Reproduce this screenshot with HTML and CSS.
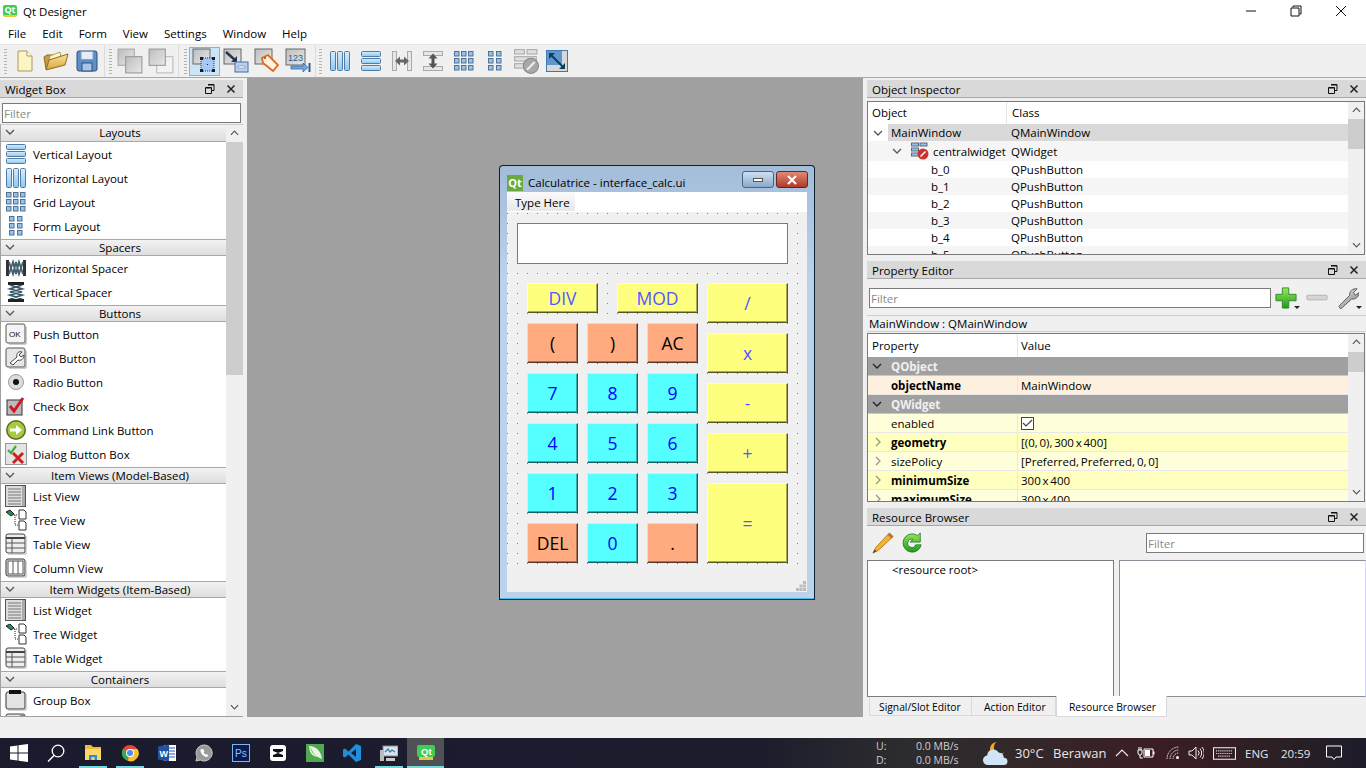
FILE: index.html
```html
<!DOCTYPE html>
<html lang="en">
<head>
  <meta charset="UTF-8">
  <title>Qt Designer</title>
  <link rel="stylesheet" href="styles.css">
</head>
<body>

<!-- icon sprite -->
<svg class="sprite" xmlns="http://www.w3.org/2000/svg">
  <defs>
    <linearGradient id="g-gray" x1="0" y1="0" x2="1" y2="1"><stop offset="0" stop-color="#bdbdbd"/><stop offset="1" stop-color="#e8e8e8"/></linearGradient>
    <linearGradient id="g-bar" x1="0" y1="0" x2="0" y2="1"><stop offset="0" stop-color="#d6eeff"/><stop offset="1" stop-color="#8cc8f2"/></linearGradient>
    <linearGradient id="g-green" x1="0" y1="0" x2="0" y2="1"><stop offset="0" stop-color="#9be85a"/><stop offset="1" stop-color="#1f9a1f"/></linearGradient>
    <linearGradient id="g-folder" x1="0" y1="0" x2="0" y2="1"><stop offset="0" stop-color="#fbe39a"/><stop offset="1" stop-color="#d9a53c"/></linearGradient>
    <linearGradient id="g-steel" x1="0" y1="0" x2="1" y2="1"><stop offset="0" stop-color="#f2f2f2"/><stop offset="1" stop-color="#777"/></linearGradient>
  </defs>

  <symbol id="i-new" viewBox="0 0 22 22"><path d="M4 1h9l5 5v15H4z" fill="#fdf5c4" stroke="#a89a62"/><path d="M13 1v5h5" fill="#fff" stroke="#a89a62"/></symbol>
  <symbol id="i-open" viewBox="0 0 26 22"><path d="M3 19 1 7l3-2h6l2 2h7l1 3v2z" fill="#c99a3e" stroke="#8c6a24"/><path d="M17 2 7 6l-1 5 12-3z" fill="#fff6d0" stroke="#b89a50"/><path d="M3 20 6 10l19-6-3 11z" fill="url(#g-folder)" stroke="#8c6a24"/></symbol>
  <symbol id="i-save" viewBox="0 0 22 22"><rect x="1" y="1" width="20" height="20" rx="2" fill="#5f8fc8" stroke="#2d4f80"/><rect x="5" y="1.500" width="12" height="8" fill="#e4edf8" stroke="#7f9cc0"/><rect x="6" y="13" width="10" height="8" fill="#a9c4e4" stroke="#2d4f80"/></symbol>
  <symbol id="i-copya" viewBox="0 0 24 24"><rect x="1" y="1" width="15" height="15" fill="url(#g-gray)" stroke="#aaa"/><rect x="8" y="8" width="15" height="15" fill="url(#g-gray)" stroke="#999"/></symbol>
  <symbol id="i-copyb" viewBox="0 0 24 24"><rect x="8" y="8" width="15" height="15" fill="#f2f2f2" stroke="#bbb"/><rect x="1" y="1" width="15" height="15" fill="url(#g-gray)" stroke="#999"/></symbol>
  <symbol id="i-edit" viewBox="0 0 26 26"><rect x="1" y="1" width="17" height="15" fill="url(#g-gray)" stroke="#666"/><rect x="9" y="10" width="13" height="13" fill="#a8c8f4" stroke="#26304a" stroke-dasharray="1 1"/><path d="M8 9h3v3H8zM20 9h3v3h-3zM8 21h3v3H8zM20 21h3v3h-3zM15 16h1v1h-1z" fill="#141c30"/></symbol>
  <symbol id="i-signal" viewBox="0 0 26 26"><rect x="1" y="1" width="17" height="15" fill="url(#g-gray)" stroke="#666"/><path d="m3 4 9 8" stroke="#26344e" stroke-width="2.500"/><path d="M14 8v6H8z" fill="#26344e"/><rect x="12" y="14" width="13" height="10" fill="#b6d2f2" stroke="#4a6a94"/><rect x="15" y="18" width="7" height="2" fill="#fff" stroke="#4a6a94" stroke-width=".5"/></symbol>
  <symbol id="i-buddy" viewBox="0 0 26 26"><rect x="1" y="1" width="17" height="15" fill="url(#g-gray)" stroke="#666"/><path d="m8 10 6-3 10 10-5 6L9 15z" fill="#fff2e0" stroke="#e0661a" stroke-width="1.800"/><circle cx="11" cy="10" r="1" fill="#555"/></symbol>

  <symbol id="i-hlay" viewBox="0 0 22 22"><g fill="url(#g-bar)" stroke="#567ba3"><rect x="1.500" y="1.500" width="5" height="19" rx="1"/><rect x="8.500" y="1.500" width="5" height="19" rx="1"/><rect x="15.500" y="1.500" width="5" height="19" rx="1"/></g></symbol>
  <symbol id="i-vlay" viewBox="0 0 22 22"><g fill="url(#g-bar)" stroke="#567ba3"><rect x="1.500" y="1.500" width="19" height="5" rx="1"/><rect x="1.500" y="8.500" width="19" height="5" rx="1"/><rect x="1.500" y="15.500" width="19" height="5" rx="1"/></g></symbol>
  <symbol id="i-grid" viewBox="0 0 22 22"><g fill="#8ec4ee" stroke="#56708f"><rect x="1.500" y="1.500" width="4.500" height="4.500"/><rect x="8.500" y="1.500" width="4.500" height="4.500"/><rect x="15.500" y="1.500" width="4.500" height="4.500"/><rect x="1.500" y="8.500" width="4.500" height="4.500"/><rect x="8.500" y="8.500" width="4.500" height="4.500"/><rect x="15.500" y="8.500" width="4.500" height="4.500"/><rect x="1.500" y="15.500" width="4.500" height="4.500"/><rect x="8.500" y="15.500" width="4.500" height="4.500"/><rect x="15.500" y="15.500" width="4.500" height="4.500"/></g></symbol>
  <symbol id="i-form" viewBox="0 0 22 22"><g fill="#8ec4ee" stroke="#56708f"><rect x="4.500" y="1.500" width="4.500" height="4.500"/><rect x="12.500" y="1.500" width="4.500" height="4.500"/><rect x="4.500" y="8.500" width="4.500" height="4.500"/><rect x="12.500" y="8.500" width="4.500" height="4.500"/><rect x="4.500" y="15.500" width="4.500" height="4.500"/><rect x="12.500" y="15.500" width="4.500" height="4.500"/></g></symbol>
  <symbol id="i-hsplit" viewBox="0 0 22 22"><g fill="#e6e6e6" stroke="#aaa"><rect x="1.500" y="1.500" width="4" height="19"/><rect x="16.500" y="1.500" width="4" height="19"/></g><path d="M4 11l5-4.500v3h4v-3l5 4.500-5 4.500v-3H9v3z" fill="#666"/></symbol>
  <symbol id="i-vsplit" viewBox="0 0 22 22"><g fill="#e6e6e6" stroke="#aaa"><rect x="1.500" y="1.500" width="19" height="4"/><rect x="1.500" y="16.500" width="19" height="4"/></g><path d="M11 3.500l4.500 5h-3v5h3l-4.500 5-4.500-5h3v-5h-3z" fill="#555"/></symbol>
  <symbol id="i-break" viewBox="0 0 24 24"><g fill="#e0e0e0" stroke="#aaa"><rect x="1.500" y="1.500" width="9" height="4"/><rect x="13" y="1.500" width="9" height="4"/><rect x="1.500" y="8" width="20" height="4"/><rect x="1.500" y="14.500" width="9" height="4"/></g><circle cx="16.500" cy="16.500" r="7" fill="#a8a8a8" stroke="#888"/><path d="m13 20 7-7" stroke="#eee" stroke-width="2"/></symbol>
  <symbol id="i-adjust" viewBox="0 0 22 22"><rect x=".5" y=".5" width="21" height="21" fill="#d8d8d8" stroke="#3d78b4"/><rect x="1" y="1" width="15" height="14" fill="#5d97cd"/><path d="m5 5 12 12" stroke="#073f66" stroke-width="2"/><path d="M3 3h6l-6 6zM19 19h-6l6-6z" fill="#073f66"/></symbol>

  <symbol id="i-hspacer" viewBox="0 0 22 22"><rect x="1" y="3" width="3" height="16" fill="#333"/><rect x="18" y="3" width="3" height="16" fill="#333"/><path d="m4 5 4 12 3-12 3 12 4-12M4 17l4-12 3 12 3-12 4 12" fill="none" stroke="#41606e" stroke-width="1.800"/></symbol>
  <symbol id="i-vspacer" viewBox="0 0 22 22"><rect x="3" y="1" width="16" height="3" fill="#222"/><rect x="3" y="18" width="16" height="3" fill="#222"/><path d="m5 4 12 4-12 3 12 3-12 4M17 4 5 8l12 3-12 3 12 4" fill="none" stroke="#3c5a68" stroke-width="1.800"/></symbol>
  <symbol id="i-tool" viewBox="0 0 22 22"><rect x="1" y="1" width="19" height="19" rx="2" fill="#e6e6e6" stroke="#555"/><path d="M21 4v17H4" fill="none" stroke="#999"/><path d="m5 16 7-6c-1-4 2-6 5-5l-3 3 2 2 3-2c0 4-3 6-6 5l-5 5z" fill="#fff" stroke="#444"/></symbol>
  <symbol id="i-radio" viewBox="0 0 22 22"><circle cx="11" cy="11" r="7.500" fill="#ddd" stroke="#999"/><circle cx="11" cy="11" r="3" fill="#111"/></symbol>
  <symbol id="i-check" viewBox="0 0 22 22"><rect x="2" y="5" width="15" height="15" fill="#bbb" stroke="#333"/><path d="m5 11 4 5 9-13" fill="none" stroke="#d01824" stroke-width="3"/></symbol>
  <symbol id="i-cmd" viewBox="0 0 22 22"><circle cx="11" cy="11" r="10" fill="#5c6b26"/><circle cx="11" cy="11" r="8.500" fill="#a6cc3e"/><path d="M5 9.500h6V6l6 5-6 5v-3.500H5z" fill="#fff"/></symbol>
  <symbol id="i-dlg" viewBox="0 0 22 22"><rect x=".5" y=".5" width="21" height="21" fill="#e4e4e4" stroke="#999"/><path d="m3 7 3 3 5-7" fill="none" stroke="#3fae3f" stroke-width="2.200"/><path d="m8 10 10 10M18 10 8 20" stroke="#d02020" stroke-width="3"/></symbol>
  <symbol id="i-list" viewBox="0 0 22 22"><rect x=".5" y=".5" width="20" height="21" fill="#ddd" stroke="#555"/><rect x="17" y="1" width="3" height="20" fill="#aaa"/><path d="M3 4h13M3 7h13M3 10h13M3 13h13M3 16h13M3 19h13" stroke="#777"/></symbol>
  <symbol id="i-tree" viewBox="0 0 22 22"><path d="m1 3 4-2 4 4-3 2z" fill="#2f8a3c" stroke="#123"/><path d="M9 6h4M10 6v10h3" fill="none" stroke="#222" stroke-dasharray="1 1"/><path d="M14 1h5l2 2v7h-7zM14 12h5l2 2v7h-7z" fill="#fff" stroke="#333"/></symbol>
  <symbol id="i-table" viewBox="0 0 22 22"><rect x="1" y="1" width="19" height="19" rx="2" fill="#eee" stroke="#444"/><path d="M1 5h19" stroke="#444" stroke-width="2"/><path d="M1 10h19M1 15h19M7 5v15" stroke="#555"/><path d="M21 3v18H3" fill="none" stroke="#aaa"/></symbol>
  <symbol id="i-column" viewBox="0 0 22 22"><rect x="1" y="2" width="19" height="17" rx="2" fill="#eee" stroke="#333"/><rect x="3" y="4" width="15" height="13" fill="#fff" stroke="#555"/><path d="M8 4v13M13 4v13" stroke="#555"/><path d="M21 4v16H3" fill="none" stroke="#aaa"/></symbol>
  <symbol id="i-group" viewBox="0 0 22 22"><rect x="1" y="3" width="19" height="17" rx="2" fill="#e4e4e4" stroke="#333"/><rect x="4" y="1" width="12" height="4" fill="#111"/><path d="M21 5v16H3" fill="none" stroke="#aaa"/></symbol>
  <symbol id="i-scroll" viewBox="0 0 22 22"><rect x="1" y="1" width="19" height="19" rx="2" fill="#e4e4e4" stroke="#444"/><rect x="15" y="2" width="4" height="17" fill="#888"/></symbol>

  <symbol id="i-float" viewBox="0 0 10 10"><path d="M3 .5h6v6H7M.5 3.500h6v6h-6z" fill="none" stroke="#111"/><path d="M3 1h6M1 4h5" stroke="#111"/></symbol>
  <symbol id="i-close" viewBox="0 0 10 10"><path d="m1.500 1.500 7 7m0-7-7 7" stroke="#222" stroke-width="1.500"/></symbol>
  <symbol id="i-chev" viewBox="0 0 10 6"><path d="m1 1 4 4 4-4" fill="none" stroke="#555" stroke-width="1.300"/></symbol>

  <symbol id="i-plus" viewBox="0 0 24 24"><path d="M8 1h7v7h8v7h-8v8H8v-8H1V8h7z" fill="url(#g-green)" stroke="#2a8a2a"/></symbol>
  <symbol id="i-minus" viewBox="0 0 24 24"><rect x="1" y="9" width="22" height="5" rx="1" fill="#d6d6d6" stroke="#b0b0b0"/></symbol>
  <symbol id="i-wrench" viewBox="0 0 24 24"><path d="m2 21 12-12c-1-4 3-8 8-7l-4 4 2 3 4-3c0 5-4 8-8 7L4 24z" fill="url(#g-steel)" stroke="#555"/></symbol>
  <symbol id="i-pencil" viewBox="0 0 24 24"><path d="M19 1l4 4L7 20l-6 3 3-6z" fill="#f0b432" stroke="#b5791a"/><path d="m19 1 4 4-2 2-4-4z" fill="#c96a3a"/><path d="M1 23l2-4 2 2z" fill="#444"/></symbol>
  <symbol id="i-refresh" viewBox="0 0 24 24"><path d="M12 2a10 10 0 1 0 10 12h-6a4.500 4.500 0 1 1-3-6l-3 3h11V1l-3 3a10 10 0 0 0-6-2z" fill="url(#g-green)" stroke="#106a10" stroke-width=".8"/></symbol>
  <symbol id="i-cwarn" viewBox="0 0 18 18"><g fill="#8ec4ee" stroke="#667"><rect x=".5" y="1" width="7" height="3"/><rect x="9" y="1" width="7" height="3"/><rect x=".5" y="6" width="7" height="3"/><rect x=".5" y="11" width="7" height="3"/></g><circle cx="12" cy="12" r="5.500" fill="#c8352e"/><path d="m9.500 14.500 5-5" stroke="#fff" stroke-width="1.500"/></symbol>

  <symbol id="t-win" viewBox="0 0 18 18"><path d="M0 2.500 7.500 1.400v7.100H0zM8.500 1.300 18 0v8.500H8.500zM0 9.500h7.500v7.100L0 15.500zM8.500 9.500H18V18l-9.500-1.300z" fill="#fff"/></symbol>
  <symbol id="t-search" viewBox="0 0 18 18"><circle cx="11" cy="7" r="5.800" fill="none" stroke="#fff" stroke-width="1.300"/><path d="M7 11.500 1 17.500" stroke="#fff" stroke-width="1.500"/></symbol>
  <symbol id="t-folder" viewBox="0 0 18 18"><path d="M1 1h6l2 2h8v13H1z" fill="#f0b93a"/><rect x="1" y="5" width="16" height="11" fill="#fcd76a"/><path d="M5 16v-5h8v5h-2.500v-3h-3v3z" fill="#2a8fd8"/></symbol>
  <symbol id="t-chrome" viewBox="0 0 18 18"><circle cx="9" cy="9" r="8" fill="#e8443a"/><path d="M9 9 2 5a8 8 0 0 0 5 11.800z" fill="#34a853"/><path d="M9 5h7.500a8 8 0 0 1-9.500 11.800z" fill="#fbc02d"/><circle cx="9" cy="9" r="4" fill="#fff"/><circle cx="9" cy="9" r="3" fill="#4a8cf0"/></symbol>
  <symbol id="t-wa" viewBox="0 0 18 18"><path d="M9 1a8 8 0 0 0-7 11.800L1 17l4.300-1A8 8 0 1 0 9 1z" fill="#9a9a9a" stroke="#c8c8c8"/><path d="M6 5c-2 2 2 8 6 8l1.500-1.500-2-1.500-1 .8-2-2.200.8-1-1-2.600z" fill="#fff"/></symbol>
  <symbol id="t-cap" viewBox="0 0 18 18"><rect x="1" y="1" width="16" height="16" rx="3" fill="#fff"/><path d="M4 5h10v2L9 9l5 2v2H4v-2l5-2-5-2z" fill="#111"/></symbol>
  <symbol id="t-corel" viewBox="0 0 18 18"><rect width="18" height="18" fill="#52a850"/><path d="M3 2c7 0 12 5 13 13-5-2-8-4-9-7L3 2c2 5 5 9 8 11C6 12 3 8 3 2z" fill="#eaf5e0"/></symbol>
  <symbol id="t-code" viewBox="0 0 18 18"><path d="M13 0 5.500 7.500 2 4.500 0 5.500v7l2 1 3.500-3L13 18l5-2V2zm0 5v8L8 9z" fill="#1f8fdc"/></symbol>
  <symbol id="t-remote" viewBox="0 0 18 18"><rect x="3" y="2" width="15" height="10" fill="#d8e4ec" stroke="#889"/><path d="m5 8 3-3 2 3 2-2 3 2" fill="none" stroke="#3a78a8" stroke-width="1.200"/><rect x="0" y="6" width="4" height="11" fill="#bbb"/><rect x="6" y="14" width="9" height="3" fill="#ccc"/></symbol>
  <symbol id="t-cloud" viewBox="0 0 24 24"><path d="M13 1a7 7 0 1 0 7 10 6 6 0 0 1-7-10z" fill="#f7a81b"/><path d="M5 23a4.500 4.500 0 0 1-1-9 6 6 0 0 1 11-3 5 5 0 0 1 5 5 3.500 3.500 0 0 1 0 7z" fill="#cfe4f7"/></symbol>
  <symbol id="t-up" viewBox="0 0 14 8"><path d="m1 7 6-6 6 6" fill="none" stroke="#eee" stroke-width="1.100"/></symbol>
  <symbol id="t-batt" viewBox="0 0 18 12"><path d="M7 2h9v8H7z" fill="none" stroke="#fff"/><rect x="8" y="3" width="5" height="6" fill="#fff"/><rect x="16" y="4.500" width="1.500" height="3" fill="#fff"/><path d="M1 3h4v3a2 2 0 0 1-4 0zM2 0v3M4 0v3M3 8v3h3" fill="none" stroke="#fff"/></symbol>
  <symbol id="t-wifi" viewBox="0 0 14 14"><path d="M1 13A12 12 0 0 1 13 1M4 13a9 9 0 0 1 9-9M7 13a6 6 0 0 1 6-6" fill="none" stroke="#ddd" stroke-dasharray="1.500 .8"/><circle cx="11.500" cy="11.500" r="1.500" fill="#fff"/></symbol>
  <symbol id="t-vol" viewBox="0 0 16 14"><path d="M1 5h3l4-4v12l-4-4H1z" fill="none" stroke="#eee"/><path d="M10 4.500a3.500 3.500 0 0 1 0 5M12 2.500a7 7 0 0 1 0 9M14 1a9 9 0 0 1 0 12" fill="none" stroke="#eee"/></symbol>
  <symbol id="t-keys" viewBox="0 0 22 12"><rect x=".5" y=".5" width="21" height="11" fill="none" stroke="#eee"/><path d="M3 3.500h16M3 6h16M5 8.500h12" stroke="#eee" stroke-dasharray="1 1"/></symbol>
  <symbol id="t-note" viewBox="0 0 16 16"><path d="M.5 1h15v11H10l-2 2.500L6 12H.5z" fill="none" stroke="#fff"/></symbol>
</svg>

<div class="app">

  <header class="titlebar">
    <span class="qt-mark">Qt</span>
    <span class="app-name">Qt Designer</span>
    <div class="win-ctl">
      <svg width="12" height="12" viewBox="0 0 12 12"><path d="M1 6h10" stroke="#111"/></svg>
      <svg width="12" height="12" viewBox="0 0 12 12"><path d="M3 2.500V1h8v8H9.500M1 3h8v8H1z" fill="none" stroke="#111"/></svg>
      <svg width="12" height="12" viewBox="0 0 12 12"><path d="m1 1 10 10M11 1 1 11" stroke="#111"/></svg>
    </div>
  </header>

  <nav class="menubar">
    <span>File</span><span>Edit</span><span>Form</span><span>View</span><span>Settings</span><span>Window</span><span>Help</span>
  </nav>

  <div class="toolbar">
    <i class="grip"></i>
    <button class="tb"><svg class="ico"><use href="#i-new"/></svg></button>
    <button class="tb"><svg class="ico ico-w"><use href="#i-open"/></svg></button>
    <button class="tb"><svg class="ico"><use href="#i-save"/></svg></button>
    <i class="tb-sep"></i><i class="grip"></i>
    <button class="tb"><svg class="ico ico-l"><use href="#i-copya"/></svg></button>
    <button class="tb"><svg class="ico ico-l"><use href="#i-copyb"/></svg></button>
    <i class="tb-sep sep-wide"></i><i class="grip"></i>
    <button class="tb on"><svg class="ico ico-l"><use href="#i-edit"/></svg></button>
    <button class="tb"><svg class="ico ico-l"><use href="#i-signal"/></svg></button>
    <button class="tb"><svg class="ico ico-l"><use href="#i-buddy"/></svg></button>
    <button class="tb">
      <svg class="ico ico-l" viewBox="0 0 26 26"><rect x="1" y="1" width="19" height="16" fill="url(#g-gray)" stroke="#666"/><text x="3" y="13" font-size="9" font-family="Liberation Sans, sans-serif" fill="#2d5b96">123</text><path d="M6 18h12v-3l5 4.500-5 4.500v-3H6z" fill="#6fa8dc" stroke="#2d5b96" stroke-width=".7"/><rect x="23.500" y="15" width="2" height="9" fill="#2d5b96"/></svg>
    </button>
    <i class="tb-sep sep-thin"></i><i class="grip"></i>
    <button class="tb"><svg class="ico"><use href="#i-hlay"/></svg></button>
    <button class="tb"><svg class="ico"><use href="#i-vlay"/></svg></button>
    <button class="tb"><svg class="ico"><use href="#i-hsplit"/></svg></button>
    <button class="tb"><svg class="ico"><use href="#i-vsplit"/></svg></button>
    <button class="tb"><svg class="ico"><use href="#i-grid"/></svg></button>
    <button class="tb"><svg class="ico"><use href="#i-form"/></svg></button>
    <button class="tb"><svg class="ico ico-l"><use href="#i-break"/></svg></button>
    <button class="tb"><svg class="ico"><use href="#i-adjust"/></svg></button>
  </div>

  <main class="workspace">

    <!-- Widget Box -->
    <aside class="dock-left">
      <div class="dock-title">Widget Box
        <span class="dock-btns"><svg><use href="#i-float"/></svg><svg><use href="#i-close"/></svg></span>
      </div>
      <input class="filter wb-filter" placeholder="Filter">
      <div class="wb-frame">
        <div class="wb-list">
          <div class="wb-cat"><svg class="chev"><use href="#i-chev"/></svg>Layouts</div>
          <div class="wb-item"><svg class="ico"><use href="#i-vlay"/></svg>Vertical Layout</div>
          <div class="wb-item"><svg class="ico"><use href="#i-hlay"/></svg>Horizontal Layout</div>
          <div class="wb-item"><svg class="ico"><use href="#i-grid"/></svg>Grid Layout</div>
          <div class="wb-item"><svg class="ico"><use href="#i-form"/></svg>Form Layout</div>
          <div class="wb-cat"><svg class="chev"><use href="#i-chev"/></svg>Spacers</div>
          <div class="wb-item"><svg class="ico"><use href="#i-hspacer"/></svg>Horizontal Spacer</div>
          <div class="wb-item"><svg class="ico"><use href="#i-vspacer"/></svg>Vertical Spacer</div>
          <div class="wb-cat"><svg class="chev"><use href="#i-chev"/></svg>Buttons</div>
          <div class="wb-item">
            <svg class="ico" viewBox="0 0 22 22"><rect x="1" y="1" width="19" height="19" rx="2" fill="#f4f4f4" stroke="#555"/><path d="M21 4v17H4" fill="none" stroke="#999"/><text x="4" y="14" font-size="8" font-family="Liberation Sans, sans-serif" fill="#111">OK</text></svg>Push Button
          </div>
          <div class="wb-item"><svg class="ico"><use href="#i-tool"/></svg>Tool Button</div>
          <div class="wb-item"><svg class="ico"><use href="#i-radio"/></svg>Radio Button</div>
          <div class="wb-item"><svg class="ico"><use href="#i-check"/></svg>Check Box</div>
          <div class="wb-item"><svg class="ico"><use href="#i-cmd"/></svg>Command Link Button</div>
          <div class="wb-item"><svg class="ico"><use href="#i-dlg"/></svg>Dialog Button Box</div>
          <div class="wb-cat"><svg class="chev"><use href="#i-chev"/></svg>Item Views (Model-Based)</div>
          <div class="wb-item"><svg class="ico"><use href="#i-list"/></svg>List View</div>
          <div class="wb-item"><svg class="ico"><use href="#i-tree"/></svg>Tree View</div>
          <div class="wb-item"><svg class="ico"><use href="#i-table"/></svg>Table View</div>
          <div class="wb-item"><svg class="ico"><use href="#i-column"/></svg>Column View</div>
          <div class="wb-cat"><svg class="chev"><use href="#i-chev"/></svg>Item Widgets (Item-Based)</div>
          <div class="wb-item"><svg class="ico"><use href="#i-list"/></svg>List Widget</div>
          <div class="wb-item"><svg class="ico"><use href="#i-tree"/></svg>Tree Widget</div>
          <div class="wb-item"><svg class="ico"><use href="#i-table"/></svg>Table Widget</div>
          <div class="wb-cat"><svg class="chev"><use href="#i-chev"/></svg>Containers</div>
          <div class="wb-item"><svg class="ico"><use href="#i-group"/></svg>Group Box</div>
          <div class="wb-item"><svg class="ico"><use href="#i-scroll"/></svg></div>
        </div>
        <div class="sb sb-wb">
          <svg class="sb-up"><use href="#i-chev"/></svg>
          <div class="sb-thumb"></div>
          <svg class="sb-down"><use href="#i-chev"/></svg>
        </div>
      </div>
    </aside>

    <!-- MDI area with the form being edited -->
    <section class="canvas">
      <div class="form-win">
        <div class="form-title">
          <span class="qt-mark qt-form">Qt</span>
          <span class="form-name">Calculatrice - interface_calc.ui</span>
          <span class="cap-btn cap-min"><i></i></span>
          <span class="cap-btn cap-close"><svg width="12" height="10" viewBox="0 0 12 10"><path d="m2 1 8 8m0-8-8 8" stroke="#fff" stroke-width="2"/></svg></span>
        </div>
        <div class="form-client">
          <div class="form-menu"><span>Type Here</span></div>
          <div class="central">
            <div class="display"></div>
            <div class="keys">
              <div class="keys-left">
                <div class="key-row key-row-top">
                  <button class="key yel k-div">DIV</button>
                  <button class="key yel k-mod">MOD</button>
                </div>
                <div class="key-row">
                  <button class="key ora">(</button><button class="key ora">)</button><button class="key ora">AC</button>
                </div>
                <div class="key-row">
                  <button class="key cya">7</button><button class="key cya">8</button><button class="key cya">9</button>
                </div>
                <div class="key-row">
                  <button class="key cya">4</button><button class="key cya">5</button><button class="key cya">6</button>
                </div>
                <div class="key-row">
                  <button class="key cya">1</button><button class="key cya">2</button><button class="key cya">3</button>
                </div>
                <div class="key-row">
                  <button class="key ora">DEL</button><button class="key cya">0</button><button class="key ora">.</button>
                </div>
              </div>
              <div class="keys-right">
                <button class="key yel">/</button>
                <button class="key yel">x</button>
                <button class="key yel">-</button>
                <button class="key yel">+</button>
                <button class="key yel k-eq">=</button>
              </div>
            </div>
          </div>
          <div class="form-status"><svg width="10" height="10" viewBox="0 0 10 10"><path d="M7 0h3v3H7zM3.500 3.500h3v3h-3zM7 3.500h3v3H7zM0 7h3v3H0zM3.500 7h3v3h-3zM7 7h3v3H7z" fill="#bbb"/></svg></div>
        </div>
      </div>
    </section>

    <!-- right docks -->
    <aside class="dock-right">
      <div class="dock-title">Object Inspector
        <span class="dock-btns"><svg><use href="#i-float"/></svg><svg><use href="#i-close"/></svg></span>
      </div>
      <div class="obj-frame">
        <div class="obj-tree">
          <div class="obj-head"><span class="col-obj">Object</span><span class="col-cls">Class</span></div>
          <div class="obj-row obj-main">
            <span class="col-obj"><svg class="chev"><use href="#i-chev"/></svg><b>MainWindow</b></span><span class="col-cls">QMainWindow</span>
          </div>
          <div class="obj-row obj-central alt">
            <span class="col-obj"><svg class="chev"><use href="#i-chev"/></svg><svg class="cw-ico"><use href="#i-cwarn"/></svg>centralwidget</span><span class="col-cls">QWidget</span>
          </div>
          <div class="obj-row"><span class="col-obj leaf">b_0</span><span class="col-cls">QPushButton</span></div>
          <div class="obj-row alt"><span class="col-obj leaf">b_1</span><span class="col-cls">QPushButton</span></div>
          <div class="obj-row"><span class="col-obj leaf">b_2</span><span class="col-cls">QPushButton</span></div>
          <div class="obj-row alt"><span class="col-obj leaf">b_3</span><span class="col-cls">QPushButton</span></div>
          <div class="obj-row"><span class="col-obj leaf">b_4</span><span class="col-cls">QPushButton</span></div>
          <div class="obj-row alt"><span class="col-obj leaf">b_5</span><span class="col-cls">QPushButton</span></div>
        </div>
        <div class="sb sb-obj">
          <svg class="sb-up"><use href="#i-chev"/></svg>
          <div class="sb-thumb"></div>
          <svg class="sb-down"><use href="#i-chev"/></svg>
        </div>
      </div>

      <div class="dock-title dock-prop">Property Editor
        <span class="dock-btns"><svg><use href="#i-float"/></svg><svg><use href="#i-close"/></svg></span>
      </div>
      <div class="prop-tools">
        <input class="filter prop-filter" placeholder="Filter">
        <span class="drop"><svg class="ico"><use href="#i-plus"/></svg></span>
        <span class="drop none"><svg class="ico"><use href="#i-minus"/></svg></span>
        <span class="drop"><svg class="ico"><use href="#i-wrench"/></svg></span>
      </div>
      <div class="prop-class">MainWindow : QMainWindow</div>
      <div class="prop-frame">
        <div class="prop-table">
          <div class="prop-head"><span class="pc-name">Property</span><span class="pc-val">Value</span></div>
          <div class="prop-group"><svg class="chev"><use href="#i-chev"/></svg>QObject</div>
          <div class="prop-row r-peach"><span class="pc-name"><b>objectName</b></span><span class="pc-val">MainWindow</span></div>
          <div class="prop-group"><svg class="chev"><use href="#i-chev"/></svg>QWidget</div>
          <div class="prop-row r-pale"><span class="pc-name">enabled</span><span class="pc-val"><i class="cb"><svg width="11" height="9" viewBox="0 0 11 9"><path d="m1 4 3 3 6-6" fill="none" stroke="#444" stroke-width="1.200"/></svg></i></span></div>
          <div class="prop-row r-yel"><span class="pc-name exp"><svg class="chev"><use href="#i-chev"/></svg><b>geometry</b></span><span class="pc-val">[(0, 0), 300 x 400]</span></div>
          <div class="prop-row r-pale"><span class="pc-name exp"><svg class="chev"><use href="#i-chev"/></svg>sizePolicy</span><span class="pc-val">[Preferred, Preferred, 0, 0]</span></div>
          <div class="prop-row r-yel"><span class="pc-name exp"><svg class="chev"><use href="#i-chev"/></svg><b>minimumSize</b></span><span class="pc-val">300 x 400</span></div>
          <div class="prop-row r-pale"><span class="pc-name exp"><svg class="chev"><use href="#i-chev"/></svg><b>maximumSize</b></span><span class="pc-val">300 x 400</span></div>
        </div>
        <div class="sb sb-prop">
          <svg class="sb-up"><use href="#i-chev"/></svg>
          <div class="sb-thumb"></div>
          <svg class="sb-down"><use href="#i-chev"/></svg>
        </div>
      </div>

      <div class="dock-title dock-res">Resource Browser
        <span class="dock-btns"><svg><use href="#i-float"/></svg><svg><use href="#i-close"/></svg></span>
      </div>
      <div class="res-tools">
        <svg class="ico"><use href="#i-pencil"/></svg>
        <svg class="ico"><use href="#i-refresh"/></svg>
        <input class="filter res-filter" placeholder="Filter">
      </div>
      <div class="res-lists">
        <div class="res-box res-tree">&lt;resource root&gt;</div>
        <div class="res-box res-files"></div>
      </div>
      <div class="tabs">
        <span class="tab t1">Signal/Slot Editor</span>
        <span class="tab t2">Action Editor</span>
        <span class="tab t3">Resource Browser</span>
      </div>
    </aside>
  </main>

  <div class="statusbar"></div>

  <footer class="taskbar">
    <span class="tk"><svg class="tk-s"><use href="#t-win"/></svg></span>
    <span class="tk"><svg class="tk-s"><use href="#t-search"/></svg></span>
    <span class="tk open"><svg class="tk-i"><use href="#t-folder"/></svg></span>
    <span class="tk open"><svg class="tk-i"><use href="#t-chrome"/></svg></span>
    <span class="tk">
      <svg class="tk-i" viewBox="0 0 18 18"><rect x="6" y="1" width="12" height="16" fill="#fff"/><path d="M11 4h6M11 7h6M11 10h6M11 13h6" stroke="#2b5fb0" stroke-width="1.200"/><path d="M0 2.500 11 .5v17L0 15.500z" fill="#24529e"/><text x="1.500" y="12.500" font-size="9" font-weight="700" font-family="Liberation Sans, sans-serif" fill="#fff">W</text></svg>
    </span>
    <span class="tk"><svg class="tk-i"><use href="#t-wa"/></svg></span>
    <span class="tk">
      <svg class="tk-s" viewBox="0 0 18 18"><rect x=".5" y=".5" width="17" height="17" fill="#0a1a55" stroke="#7fb4f0"/><text x="3" y="13" font-size="10" font-family="Liberation Sans, sans-serif" fill="#8cc0f8">Ps</text></svg>
    </span>
    <span class="tk"><svg class="tk-s"><use href="#t-cap"/></svg></span>
    <span class="tk"><svg class="tk-s"><use href="#t-corel"/></svg></span>
    <span class="tk"><svg class="tk-i"><use href="#t-code"/></svg></span>
    <span class="tk open"><svg class="tk-i"><use href="#t-remote"/></svg></span>
    <span class="tk open cur">
      <svg class="tk-i" viewBox="0 0 18 18"><rect y="1" width="18" height="12" rx="2" fill="#41cd52"/><text x="4" y="10.500" font-size="9.500" font-weight="700" font-family="Liberation Sans, sans-serif" fill="#fff">Qt</text><rect x="2" y="13" width="14" height="3" fill="#f5c33b"/></svg>
    </span>

    <div class="tray">
      <div class="net"><span>U:</span><span>0.0 MB/s</span><span>D:</span><span>0.0 MB/s</span></div>
      <svg class="tr-cloud"><use href="#t-cloud"/></svg>
      <span class="tr-temp">30°C</span>
      <span class="tr-wx">Berawan</span>
      <svg class="tr-up"><use href="#t-up"/></svg>
      <svg class="tr-batt"><use href="#t-batt"/></svg>
      <svg class="tr-wifi"><use href="#t-wifi"/></svg>
      <svg class="tr-vol"><use href="#t-vol"/></svg>
      <svg class="tr-keys"><use href="#t-keys"/></svg>
      <span class="tr-lang">ENG</span>
      <span class="tr-clock">20:59</span>
      <svg class="tr-note"><use href="#t-note"/></svg>
    </div>
  </footer>
</div>
</body>
</html>
```
FILE: styles.css
```css
* { box-sizing: border-box; }

body {
  margin: 0;
  font: 11.5px "Open Sans", "Noto Sans", sans-serif;
  color: #000;
  background: #f0f0f0;
}

button, input { font: inherit; }
input::placeholder { color: #8a8a8a; opacity: 1; }

.sprite { position: absolute; width: 0; height: 0; }

.app {
  width: 1366px;
  height: 768px;
  display: flex;
  flex-direction: column;
  overflow: hidden;
}

.ico { width: 22px; height: 22px; flex: none; display: block; }
.ico-w { width: 26px; }
.ico-l { width: 26px; height: 26px; }
.chev { width: 10px; height: 6px; flex: none; }

/* top of the window */
.titlebar {
  height: 22px;
  background: #fff;
  display: flex;
  align-items: center;
  padding-left: 3px;
  flex: none;
}
.qt-mark {
  width: 14px;
  height: 12px;
  background: #41cd52;
  color: #fff;
  font-size: 9px;
  font-weight: 700;
  line-height: 10px;
  text-align: center;
  border-radius: 2px;
  border-bottom: 2px solid #f0c93a;
}
.app-name { margin-left: 6px; }
.win-ctl {
  margin-left: auto;
  display: flex;
  gap: 33px;
  padding-right: 19px;
}

.menubar {
  height: 22px;
  background: #fff;
  display: flex;
  align-items: center;
  flex: none;
}
.menubar span { padding: 0 8px; }

.toolbar {
  height: 34px;
  background: #f0f0f0;
  border-top: 1px solid #e6e6e6;
  border-bottom: 1px solid #a8a8a8;
  display: flex;
  align-items: center;
  padding-left: 4px;
  flex: none;
}
.grip {
  width: 3px;
  height: 25px;
  margin-right: 2px;
  background: repeating-linear-gradient(#b4b4b4 0 1px, transparent 1px 3px);
}
.tb {
  width: 31px;
  height: 29px;
  padding: 0;
  border: 1px solid transparent;
  background: none;
  display: flex;
  align-items: center;
  justify-content: center;
}
.tb.on { background: #cde4f7; border-color: #7cb6e4; }
.tb-sep {
  width: 1px;
  height: 32px;
  background: #dcdcdc;
  margin: 0 4px 0 2px;
}
.sep-wide { margin-right: 5px; }
.sep-thin { margin-right: 3px; }

.workspace { height: 639px; display: flex; flex: none; }

/* docks */
.dock-left { width: 243px; padding-top: 2px; flex: none; }
.dock-right { width: 499px; margin-left: 4px; padding-top: 2px; flex: none; }

.dock-title {
  height: 18px;
  background: #d9d9d9;
  border-bottom: 1px solid #a8a8a8;
  display: flex;
  align-items: center;
  padding: 1px 0 0 5px;
}
.dock-btns {
  margin-left: auto;
  display: flex;
  gap: 11px;
  padding-right: 7px;
}
.dock-btns svg { width: 10px; height: 10px; }

.filter {
  display: block;
  height: 20px;
  padding: 0 1px;
  border: 1px solid #7a7a7a;
  background: #fff;
  outline: none;
}
.wb-filter { width: 239px; margin: 5px 0 1px 2px; }

.wb-frame {
  height: 593px;
  display: flex;
  border: 1px solid #a0a0a0;
  border-top: 1px solid #d0d0d0;
  background: #fff;
}
.wb-list { width: 225px; overflow: hidden; flex: none; }
.wb-cat {
  height: 17px;
  margin-bottom: 1px;
  padding-left: 13px;
  position: relative;
  text-align: center;
  line-height: 16px;
  background: linear-gradient(#f2f2f2, #dedede);
  border-top: 1px solid #a8a8a8;
  border-bottom: 1px solid #a8a8a8;
}
.wb-cat:first-child { border-top: 0; }
.wb-cat .chev { position: absolute; left: 4px; top: 4px; }
.wb-item {
  height: 24px;
  display: flex;
  align-items: center;
  gap: 6px;
  padding: 0 0 2px 4px;
}

/* scrollbars */
.sb {
  width: 17px;
  background: #f0f0f0;
  display: flex;
  flex-direction: column;
  flex: none;
}
.sb svg { width: 9px; height: 6px; margin: 5px 4px 6px; flex: none; }
.sb-up { transform: rotate(180deg); }
.sb-down { margin-top: auto !important; }
.sb-thumb { background: #cdcdcd; flex: none; }
.sb-wb .sb-thumb { height: 233px; }
.sb-obj { width: 16px; }
.sb-obj .sb-thumb { height: 30px; }
.sb-prop { width: 16px; }
.sb-prop .sb-thumb { height: 20px; margin-top: 1px; }

/* canvas */
.canvas {
  width: 616px;
  margin-left: 4px;
  background: #a0a0a0;
  position: relative;
  flex: none;
}
.form-win {
  position: absolute;
  left: 252px;
  top: 87px;
  width: 316px;
  height: 435px;
  border: 1px solid #0e2030;
  border-radius: 4px 4px 0 0;
  border-bottom-color: #0a3a52;
  background: linear-gradient(#a3bcd8 0, #b9d1ea 25%, #bcd3ec 100%);
  box-shadow: inset 0 -1px 0 #4ab8e8;
  padding: 0 7px;
}
.form-title {
  height: 26px;
  display: flex;
  align-items: center;
  position: relative;
}
.qt-form {
  width: 16px;
  height: 16px;
  margin-top: 7px;
  font-size: 11px;
  line-height: 16px;
  background: #6aa93c;
  border: 0;
  border-radius: 0;
  flex: none;
}
.form-name { margin: 7px 0 0 5px; }
.cap-btn {
  position: absolute;
  top: 5px;
  width: 32px;
  height: 17px;
  border: 1px solid #4a6480;
  border-radius: 3px;
  display: flex;
  align-items: center;
  justify-content: center;
}
.cap-min { left: 235px; background: linear-gradient(#cfe0f2, #8aa8c8); }
.cap-min i { width: 10px; height: 4px; background: #fff; border: 1px solid #555; }
.cap-close { left: 269px; background: linear-gradient(#e08a78, #b03a28); border-color: #5e2a22; }

.form-client {
  width: 300px;
  height: 400px;
  background: #f0f0f0;
  display: flex;
  flex-direction: column;
}
.form-menu { height: 20px; background: #fff; }
.form-menu span {
  display: block;
  width: 68px;
  height: 19px;
  padding-left: 8px;
  line-height: 21px;
  background: linear-gradient(#fafafa, #e8e8e8);
}
.central {
  height: 360px;
  padding: 11px 0 0 10px;
  background-image: conic-gradient(from 270deg at 1px 1px, #808080 90deg, transparent 0);
  background-size: 10px 10px;
  background-position: 0 1px;
}
.display {
  width: 271px;
  height: 41px;
  background: #fff;
  border: 1px solid #7a7a7a;
}
.keys { display: flex; margin: 19px 0 0 10px; gap: 9px; }
.keys-left { width: 171px; display: flex; flex-direction: column; gap: 10px; }
.keys-right { width: 81px; display: flex; flex-direction: column; gap: 10px; }
.key-row { display: flex; justify-content: space-between; }
.key-row-top { height: 30px; }

.key {
  width: 51px;
  height: 40px;
  padding: 0;
  font-size: 17.5px;
  border: 1px solid;
}
.keys-right .key { width: 81px; }
.keys-right .k-eq { height: 80px; }
.key-row-top .key { height: 30px; }
.key-row-top .k-div { width: 71px; }
.key-row-top .k-mod { width: 81px; }
.yel { background: #ffff7f; color: #5555ff; border-color: #ffffbf #55552a #55552a #ffffbf; box-shadow: inset -1px -1px 0 #aaaa55; }
.cya { background: #55ffff; color: #0000ff; border-color: #aaffff #1a5f5f #1a5f5f #aaffff; box-shadow: inset -1px -1px 0 #38aaaa; }
.ora { background: #ffaa7f; color: #000; border-color: #ffd4bf #553829 #553829 #ffd4bf; box-shadow: inset -1px -1px 0 #aa7154; }

.form-status {
  height: 20px;
  display: flex;
  justify-content: flex-end;
  align-items: flex-end;
  padding: 0 1px 1px 0;
}

/* object inspector */
.obj-frame {
  height: 154px;
  margin-top: 3px;
  display: flex;
  border: 1px solid #7a7a7a;
  background: #fff;
  width: 498px;
}
.obj-tree { flex: 1; overflow: hidden; }
.obj-head {
  height: 22px;
  display: flex;
  align-items: center;
}
.col-obj { width: 139px; display: flex; align-items: center; flex: none; height: 100%; white-space: nowrap; }
.col-cls { padding-left: 4px; }
.obj-head .col-obj { padding: 0 0 2px 4px; border-right: 1px solid #e5e5e5; }
.obj-head .col-cls { padding: 0 0 2px 5px; }
.obj-row { height: 17px; display: flex; align-items: center; }
.obj-row.alt { background: #f5f5f5; }
.obj-main { background: linear-gradient(90deg, #fff 20px, #d9d9d9 20px); }
.obj-main b { font-weight: 400; margin-left: 8px; }
.obj-main .chev { margin-left: 5px; }
.obj-central { height: 20px; }
.obj-central .chev { margin-left: 24px; }
.cw-ico { width: 18px; height: 18px; margin: 0 4px 0 9px; flex: none; }
.leaf { padding-left: 63px; }

/* property editor */
.dock-prop { margin-top: 6px; }
.prop-tools {
  display: flex;
  align-items: center;
  margin: 9px 0 7px 2px;
  height: 20px;
}
.prop-filter { width: 402px; }
.drop { position: relative; width: 31px; padding-left: 4px; }
.drop::after {
  content: "";
  position: absolute;
  right: 2px;
  bottom: 0;
  border: 3px solid transparent;
  border-top-color: #222;
  border-bottom: 0;
}
.drop.none::after { display: none; }
.prop-class {
  height: 17px;
  line-height: 16px;
  padding-left: 2px;
  border-top: 1px solid #d0d0d0;
  border-bottom: 1px solid #d0d0d0;
}
.prop-frame {
  height: 169px;
  margin-top: 1px;
  display: flex;
  border: 1px solid #7a7a7a;
  background: #fff;
  width: 498px;
}
.prop-table { flex: 1; overflow: hidden; }
.prop-head { height: 23px; display: flex; align-items: center; }
.pc-name { width: 150px; height: 100%; display: flex; align-items: center; padding-left: 23px; flex: none; position: relative; }
.prop-head .pc-name { padding-left: 4px; border-right: 1px solid #e5e5e5; }
.pc-val { padding-left: 3px; display: flex; align-items: center; height: 100%; word-spacing: -1.2px; }
.prop-group {
  height: 19px;
  background: #a0a0a0;
  color: #f0f0f0;
  font-weight: 700;
  display: flex;
  align-items: center;
  gap: 9px;
  padding-left: 4px;
  border-bottom: 1px solid #c8c8c8;
}
.prop-group .chev { filter: brightness(.4); }
.prop-row {
  height: 19px;
  display: flex;
  align-items: center;
  border-bottom: 1px solid #e8e8e8;
}
.prop-row .pc-name { border-right: 1px solid #e8e8e8; }
.prop-row b { font-weight: 700; }
.exp .chev {
  position: absolute;
  left: 5px;
  top: 6px;
  transform: rotate(-90deg);
  opacity: .6;
}
.r-peach { background: #fef0df; }
.r-pale { background: #ffffdc; }
.r-yel { background: #ffffbf; }
.cb {
  width: 13px;
  height: 13px;
  border: 1px solid #444;
  background: #fff;
  display: flex;
  align-items: center;
  justify-content: center;
}

/* resource browser */
.dock-res { margin-top: 6px; }
.res-tools {
  height: 34px;
  display: flex;
  align-items: center;
  padding-left: 5px;
  gap: 7px;
}
.res-filter { width: 218px; margin-left: auto; margin-right: 2px; }
.res-lists { display: flex; gap: 5px; height: 137px; }
.res-box { background: #fff; border: 1px solid #7a7a7a; height: 137px; }
.res-tree { width: 247px; padding-left: 24px; line-height: 18px; }
.res-files { width: 247px; border-color: #8a8f98; border-right-color: #d8d8ff; }
.tabs { display: flex; padding-left: 2px; height: 21px; align-items: flex-start; }
.tab {
  height: 19px;
  line-height: 20px;
  font-size: 10.3px;
  border: 1px solid #d9d9d9;
  border-top: 0;
  background: #f0f0f0;
  display: block;
  white-space: nowrap;
  flex: none;
}
.t1 { width: 103px; padding-left: 9px; }
.t2 { width: 84px; padding-left: 12px; border-left: 0; }
.t3 { width: 111px; height: 21px; line-height: 23px; padding-left: 12px; background: #fff; margin-top: -1px; }

.statusbar { height: 21px; background: #f0f0f0; flex: none; }

/* windows taskbar */
.taskbar {
  height: 30px;
  flex: none;
  display: flex;
  color: #e6e6e6;
  background: linear-gradient(90deg, #1a1b2c 0, #1b1c2c 55%, #2c2c2e 66%, #33282a 75%, #3b1d24 85%, #2c2024 93%, #1e1c2a 100%);
}
.tk {
  width: 37px;
  height: 30px;
  display: flex;
  align-items: center;
  justify-content: center;
  position: relative;
  flex: none;
}
.tk-s { width: 18px; height: 18px; }
.tk-i { width: 18px; height: 18px; }
.tk.open::after {
  content: "";
  position: absolute;
  left: 5px;
  right: 4px;
  bottom: 0;
  height: 2px;
  background: #76d7dc;
}
.tk.cur { background: #505154; }
.tk.cur::after { left: 0; right: 0; }

.tray {
  position: relative;
  flex: 1;
  display: flex;
  align-items: center;
}
.net {
  display: grid;
  grid-template-columns: 40px 42px;
  margin-left: 432px;
  font-size: 10.5px;
  line-height: 14px;
  color: #cfcfcf;
  width: 82px;
  white-space: nowrap;
}
.tr-cloud { width: 25px; height: 25px; margin-left: 25px; flex: none; }
.tr-temp { font-size: 13px; margin-left: 7px; width: 38px; flex: none; }
.tr-wx { font-size: 13px; width: 60px; flex: none; }
.tr-up { width: 14px; height: 8px; margin-left: 2px; }
.tr-batt { width: 18px; height: 12px; margin-left: 8px; }
.tr-wifi { width: 14px; height: 14px; margin-left: 11px; }
.tr-vol { width: 16px; height: 14px; margin-left: 8px; }
.tr-keys { width: 23px; height: 13px; margin-left: 9px; }
.tr-lang { margin-left: 9px; width: 36px; flex: none; }
.tr-clock { width: 40px; flex: none; }
.tr-note { width: 16px; height: 16px; margin-left: 5px; }
```
